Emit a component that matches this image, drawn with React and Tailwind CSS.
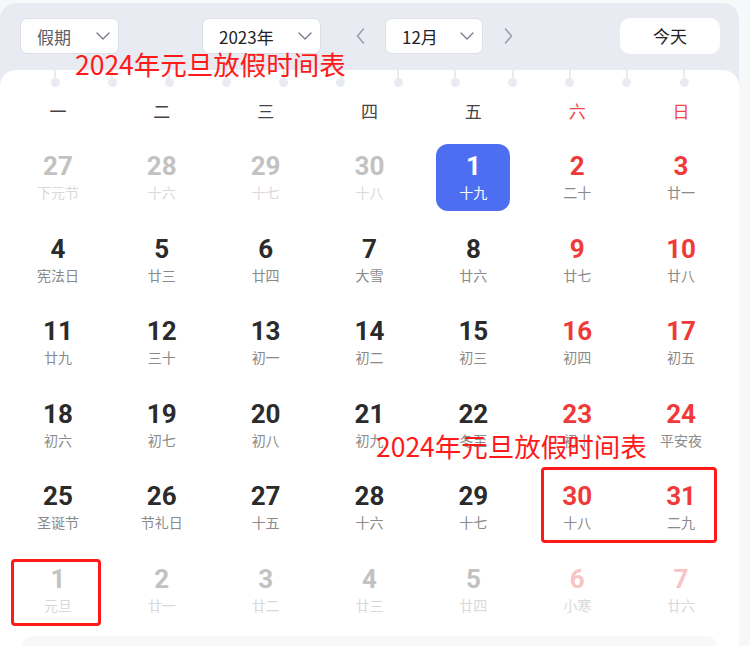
import React from "react";

const CJK = { fontFamily: '"Noto Sans CJK SC", "Noto Sans", sans-serif' };
const NUM = { fontFamily: 'Roboto, "Liberation Sans", sans-serif' };

const rows = [
  [["27","下元节","o"],["28","十六","o"],["29","十七","o"],["30","十八","o"],["1","十九","s"],["2","二十","r"],["3","廿一","r"]],
  [["4","宪法日","n"],["5","廿三","n"],["6","廿四","n"],["7","大雪","n"],["8","廿六","n"],["9","廿七","r"],["10","廿八","r"]],
  [["11","廿九","n"],["12","三十","n"],["13","初一","n"],["14","初二","n"],["15","初三","n"],["16","初四","r"],["17","初五","r"]],
  [["18","初六","n"],["19","初七","n"],["20","初八","n"],["21","初九","n"],["22","冬至","n"],["23","初十","r"],["24","平安夜","r"]],
  [["25","圣诞节","n"],["26","节礼日","n"],["27","十五","n"],["28","十六","n"],["29","十七","n"],["30","十八","r"],["31","二九","r"]],
  [["1","元旦","o"],["2","廿一","o"],["3","廿二","o"],["4","廿三","o"],["5","廿四","o"],["6","小寒","or"],["7","廿六","or"]],
];

const weekdays = ["一","二","三","四","五","六","日"];

function Chevron() {
  return (
    <svg width="14" height="8" viewBox="0 0 14 8" fill="none">
      <path d="M1 1 L7 7 L13 1" stroke="#73788a" strokeWidth="1.3" strokeLinecap="round" strokeLinejoin="round" />
    </svg>
  );
}

function Select({ label, width, color }) {
  return (
    <div
      className="h-[36px] bg-white border border-[#dcdfe6] rounded-[7px] flex items-center justify-between pl-[16px] pr-[8px]"
      style={{ width }}
    >
      <span className="text-[17px] leading-none" style={{ ...CJK, color }}>{label}</span>
      <Chevron />
    </div>
  );
}

function Cell({ d }) {
  const [num, lunar, kind] = d;
  let box = "";
  let numC = "text-[#2b2b2b]";
  let lunC = "text-[#8a8a8a]";
  if (kind === "s") { box = "bg-[#4e6ef2]"; numC = "text-white"; lunC = "text-white"; }
  else if (kind === "r") { numC = "text-[#f03a3a]"; }
  else if (kind === "o") { numC = "text-[#c2c2c2]"; lunC = "text-[#d9d9d9]"; }
  else if (kind === "or") { numC = "text-[#f8c4c4]"; lunC = "text-[#d9d9d9]"; }
  return (
    <div className="h-[82.5px] flex justify-center pt-[8px]">
      <div className={`w-[74px] h-[67px] rounded-[12px] flex flex-col items-center pt-[8px] ${box}`}>
        <div className={`text-[26px] leading-[28px] font-bold ${numC}`} style={NUM}>{num}</div>
        <div className={`text-[14px] leading-[18px] mt-[3px] whitespace-nowrap ${lunC}`} style={CJK}>{lunar}</div>
      </div>
    </div>
  );
}

export default function App() {
  const dots = Array.from({ length: 12 });
  return (
    <div className="relative w-[750px] h-[646px] overflow-hidden bg-[#f7f8fa] pt-[3px]" style={CJK}>
      <div className="w-[739px] h-[643px] bg-[#e8ebf2] rounded-t-[16px] flex flex-col">
        {/* top bar */}
        <div className="h-[67px] shrink-0 flex items-start pt-[15px] pl-[20px] pr-[19px]">
          <Select label="假期" width={99} color="#5c5f66" />
          <div className="ml-[83px]"><Select label="2023年" width={119} color="#222" /></div>
          <div className="ml-[31px] w-[16px] h-[36px] flex items-center justify-center">
            <svg width="9" height="16" viewBox="0 0 9 16" fill="none">
              <path d="M7.5 1 L1.5 8 L7.5 15" stroke="#9a9da6" strokeWidth="1.5" strokeLinecap="round" strokeLinejoin="round" />
            </svg>
          </div>
          <div className="ml-[17px]"><Select label="12月" width={98} color="#222" /></div>
          <div className="ml-[17px] w-[16px] h-[36px] flex items-center justify-center">
            <svg width="9" height="16" viewBox="0 0 9 16" fill="none">
              <path d="M1.5 1 L7.5 8 L1.5 15" stroke="#9a9da6" strokeWidth="1.5" strokeLinecap="round" strokeLinejoin="round" />
            </svg>
          </div>
          <div className="ml-auto w-[100px] h-[36px] bg-white rounded-[10px] flex items-center justify-center text-[17px] text-[#222]">
            今天
          </div>
        </div>

        {/* white card */}
        <div className="flex-1 bg-white rounded-t-[16px] flex flex-col">
          <div className="h-[17px] flex pl-[50.5px] gap-[48.2px]">
            {dots.map((_, i) => (
              <div key={i} className="w-[9px] flex flex-col items-center">
                <div className="w-[2px] h-[8px] bg-[#e8ebf2]" />
                <div className="w-[9px] h-[9px] rounded-full bg-[#e8ebf2]" />
              </div>
            ))}
          </div>
          <div className="mt-[2px] h-[44px] grid grid-cols-7 px-[6px]">
            {weekdays.map((w, i) => (
              <div key={w} className={`flex items-center justify-center text-[17px] ${i >= 5 ? "text-[#f04848]" : "text-[#444]"}`}>
                {w}
              </div>
            ))}
          </div>
          <div className="mt-[3px] grid grid-cols-7 px-[6px]">
            {rows.flat().map((d, i) => <Cell key={i} d={d} />)}
          </div>
          <div className="mt-[5px] ml-[22px] mr-[21px] h-[20px] bg-[#f7f8fa] rounded-t-[12px]" />
        </div>
      </div>

      {/* annotations */}
      <div className="absolute left-[75px] top-[51px] text-[26.5px] leading-[26.5px] text-[#ff1a1a] whitespace-nowrap">2024年元旦放假时间表</div>
      <div className="absolute left-[376px] top-[433px] text-[26.5px] leading-[26.5px] text-[#ff1a1a] whitespace-nowrap">2024年元旦放假时间表</div>
      <div className="absolute left-[541px] top-[467px] w-[176px] h-[76px] border-[3px] border-[#ff1a1a] rounded-[4px]" />
      <div className="absolute left-[11px] top-[559px] w-[90px] h-[67px] border-[3px] border-[#ff1a1a] rounded-[4px]" />
    </div>
  );
}
